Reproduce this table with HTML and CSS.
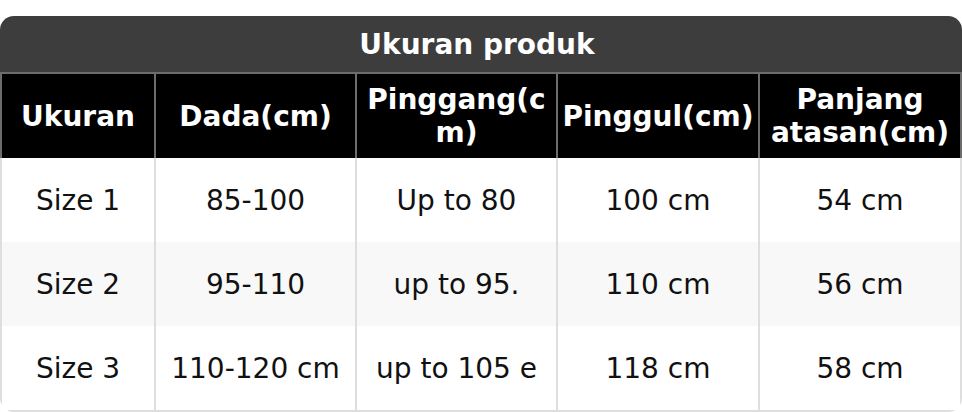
FILE: index.html
```html
<!DOCTYPE html>
<html lang="id">
<head>
<meta charset="utf-8">
<title>Ukuran produk</title>
<link rel="stylesheet" href="styles.css">
</head>
<body>
<div class="card">
  <div class="title">Ukuran produk</div>
  <div class="row head">
    <div class="cell">Ukuran</div>
    <div class="cell">Dada(cm)</div>
    <div class="cell">Pinggang(cm)</div>
    <div class="cell">Pinggul(cm)</div>
    <div class="cell">Panjang atasan(cm)</div>
  </div>
  <div class="row">
    <div class="cell">Size 1</div>
    <div class="cell">85-100</div>
    <div class="cell">Up to 80</div>
    <div class="cell">100 cm</div>
    <div class="cell">54 cm</div>
  </div>
  <div class="row alt">
    <div class="cell">Size 2</div>
    <div class="cell">95-110</div>
    <div class="cell">up to 95.</div>
    <div class="cell">110 cm</div>
    <div class="cell">56 cm</div>
  </div>
  <div class="row last">
    <div class="cell">Size 3</div>
    <div class="cell">110-120 cm</div>
    <div class="cell">up to 105 e</div>
    <div class="cell">118 cm</div>
    <div class="cell">58 cm</div>
  </div>
</div>
</body>
</html>
```

FILE: styles.css
```css
html, body {
  margin: 0;
  padding: 0;
  background: #fff;
}

body {
  font-family: "DejaVu Sans", "Liberation Sans", sans-serif;
  font-size: 28px;
  color: #111;
}

.card {
  margin-top: 16px;
  width: 962px;
  border-radius: 14px;
  overflow: hidden;
  background: #fff;
}

.title {
  height: 56px;
  padding-right: 8px;
  background: #3d3d3d;
  color: #fff;
  font-weight: bold;
  display: flex;
  align-items: center;
  justify-content: center;
  border-bottom: 2px solid #6c6c6c;
}

.row {
  display: grid;
  grid-template-columns: 156px 201px 201px 202px 202px;
  height: 84px;
}

.cell {
  box-sizing: border-box;
  display: flex;
  align-items: center;
  justify-content: center;
  text-align: center;
  padding: 0 4px;
  border-right: 2px solid #dedede;
  overflow-wrap: anywhere;
}

.cell:first-child {
  border-left: 2px solid #dedede;
}

.head {
  background: #000;
  color: #fff;
  font-weight: bold;
}

.head .cell {
  border-color: #6c6c6c;
}

.alt {
  background: #f8f8f8;
}

.last {
  height: 86px;
}

.last .cell {
  border-bottom: 2px solid #dedede;
}
```
